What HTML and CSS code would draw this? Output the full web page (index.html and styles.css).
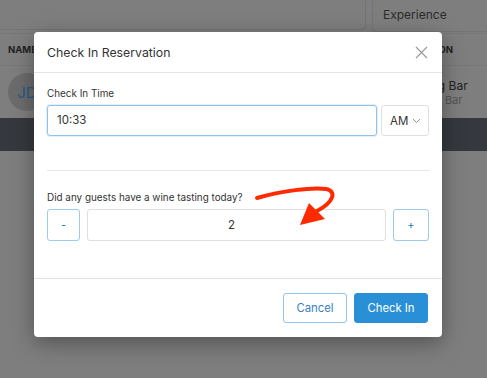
FILE: index.html
```html
<!DOCTYPE html>
<html lang="en">
<head>
    <meta charset="UTF-8">
    <title>Check In Reservation</title>
    <link rel="stylesheet" href="styles.css">
</head>
<body>
    <div class="page">
        <div class="filters">
            <div class="search"></div>
            <div class="experience">Experience</div>
        </div>
        <div class="table-head">
            <span class="col-name">NAME</span>
            <span class="col-loc">LOCATION</span>
        </div>
        <div class="table-row">
            <div class="col-name"><span class="avatar">JD</span></div>
            <div class="col-loc">
                <div class="loc-main">Tasting Bar</div>
                <div class="loc-sub">Tasting Bar</div>
            </div>
        </div>
        <div class="dark-bar"></div>
    </div>

    <div class="modal">
        <div class="modal-header">
            <span class="modal-title">Check In Reservation</span>
            <svg class="close" width="13" height="13" viewBox="0 0 13 13">
                <path d="M1 1 L12 12 M12 1 L1 12" stroke="#9a9a9a" stroke-width="1.2" fill="none"/>
            </svg>
        </div>
        <div class="modal-body">
            <label class="field-label">Check In Time</label>
            <div class="time-row">
                <div class="time-input">10:33</div>
                <div class="ampm">AM
                    <svg width="9" height="6" viewBox="0 0 9 6"><path d="M1 1 L4.5 4.5 L8 1" stroke="#9a9a9a" stroke-width="1" fill="none"/></svg>
                </div>
            </div>
            <hr class="divider">
            <label class="field-label">Did any guests have a wine tasting today?</label>
            <div class="counter">
                <button class="step minus">-</button>
                <div class="count">2</div>
                <button class="step plus">+</button>
            </div>
        </div>
        <div class="modal-footer">
            <button class="btn btn-cancel">Cancel</button>
            <button class="btn btn-primary">Check In</button>
        </div>
    </div>

    <svg class="annotation" width="487" height="378" viewBox="0 0 487 378">
        <path d="M257 198 C 281 191, 312 187, 326 189 C 337 191, 334 202, 317 211" stroke="#ff2a00" stroke-width="4" fill="none" stroke-linecap="round"/>
        <polygon points="300,225 309,203 325,219" fill="#ff2a00"/>
    </svg>
</body>
</html>
```
FILE: styles.css
```css
body {
    margin: 0;
    width: 487px;
    height: 378px;
    overflow: hidden;
    background: #7e7e7e;
    font-family: Inter, "Liberation Sans", sans-serif;
    position: relative;
}
.page {
    display: flex;
    flex-direction: column;
}
.filters {
    display: flex;
    height: 32px;
    gap: 6px;
}
.search {
    width: 366px;
    height: 30px;
    border: 1px solid #747474;
    border-top: none;
    border-left: none;
    border-radius: 0 0 4px 0;
    box-sizing: border-box;
}
.experience {
    flex: 1;
    height: 32px;
    border: 1px solid #747474;
    border-top: none;
    border-right: none;
    border-radius: 0 0 0 4px;
    box-sizing: border-box;
    padding-left: 10px;
    line-height: 30px;
    font-size: 12px;
    color: #2b2b2b;
}
.table-head {
    display: flex;
    height: 33px;
    align-items: center;
    border-top: 1px solid #777;
    border-bottom: 1px solid #777;
    box-sizing: border-box;
    font-size: 9.5px;
    font-weight: 700;
    color: #1e1e1e;
    margin-top: 1px;
}
.col-name {
    width: 396px;
    padding-left: 8px;
}
.col-loc {
    flex: 1;
}
.table-row {
    display: flex;
    align-items: center;
    height: 52px;
}
.avatar {
    display: flex;
    width: 38px;
    height: 38px;
    border-radius: 50%;
    background: #6c6c6c;
    color: #255a8a;
    font-size: 15px;
    align-items: center;
    justify-content: center;
}
.loc-main {
    font-size: 12px;
    color: #222;
}
.loc-sub {
    font-size: 11px;
    color: #555;
}
.dark-bar {
    height: 33px;
    background: #35383e;
}

.modal {
    position: absolute;
    left: 34px;
    top: 32px;
    width: 408px;
    height: 305px;
    background: #fff;
    border-radius: 4px;
    box-shadow: 0 6px 22px rgba(0, 0, 0, 0.35);
    display: flex;
    flex-direction: column;
}
.modal-header {
    display: flex;
    align-items: center;
    justify-content: space-between;
    height: 40px;
    padding: 0 14px 0 13px;
    border-bottom: 1px solid #e4e4e4;
}
.modal-title {
    font-size: 12.3px;
    color: #333;
}
.modal-body {
    flex: 1;
    padding: 13px 13px 0 13px;
}
.field-label {
    display: block;
    font-size: 9.9px;
    line-height: 14px;
    color: #333;
    margin-bottom: 5px;
}
.time-row {
    display: flex;
    gap: 4px;
}
.time-input {
    width: 330px;
    height: 31px;
    box-sizing: border-box;
    border: 1px solid #8fc2ef;
    border-radius: 3px;
    box-shadow: 0 0 0 1px rgba(143, 194, 239, 0.25);
    padding-left: 9px;
    line-height: 29px;
    font-size: 11.5px;
    color: #333;
}
.ampm {
    flex: 1;
    height: 31px;
    box-sizing: border-box;
    border: 1px solid #e0e0e0;
    border-radius: 3px;
    display: flex;
    align-items: center;
    gap: 4px;
    padding-left: 8px;
    font-size: 11.5px;
    color: #333;
}
.divider {
    border: none;
    border-top: 1px solid #e6e6e6;
    margin: 34px 0 19px 0;
}
.counter {
    display: flex;
    gap: 7px;
}
.step {
    height: 32px;
    background: #fff;
    border: 1px solid #9ccaf0;
    border-radius: 3px;
    color: #2a7bbf;
    font-family: Inter, "Liberation Sans", sans-serif;
    font-size: 11px;
    padding: 0;
}
.minus {
    width: 33px;
}
.plus {
    width: 36px;
}
.count {
    flex: 1;
    height: 32px;
    box-sizing: border-box;
    border: 1px solid #e0e0e0;
    border-radius: 3px;
    text-align: center;
    padding-right: 10px;
    line-height: 30px;
    font-size: 11.5px;
    color: #333;
}
.modal-footer {
    display: flex;
    justify-content: flex-end;
    gap: 7px;
    height: 58px;
    align-items: center;
    padding: 0 14px;
    border-top: 1px solid #e4e4e4;
}
.btn {
    height: 30px;
    border-radius: 3px;
    font-family: Inter, "Liberation Sans", sans-serif;
    font-size: 11.3px;
    padding: 0;
}
.btn-cancel {
    width: 64px;
    background: #fff;
    border: 1px solid #90c4ee;
    color: #3a80c2;
}
.btn-primary {
    width: 74px;
    background: #2990d8;
    border: 1px solid #2990d8;
    color: #fff;
}
.annotation {
    position: absolute;
    left: 0;
    top: 0;
    pointer-events: none;
}
```
